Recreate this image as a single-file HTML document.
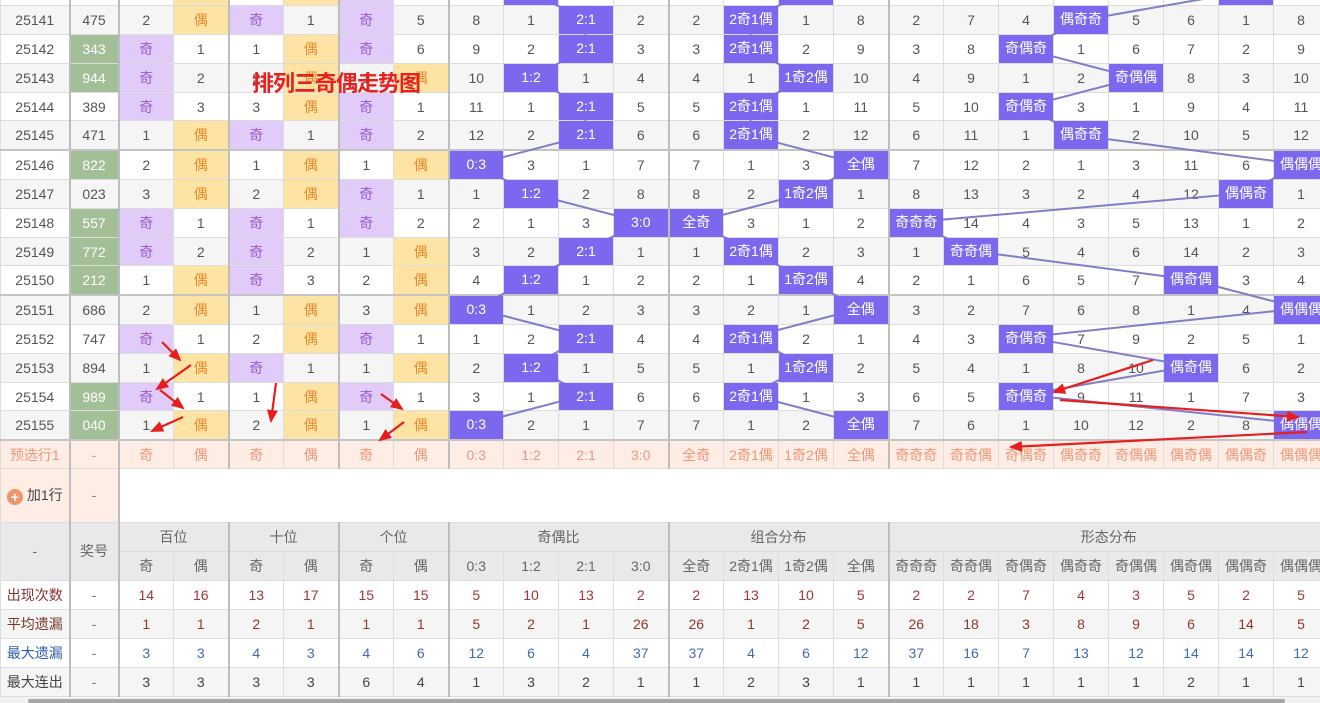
<!DOCTYPE html>
<html><head><meta charset="utf-8"><style>
html,body{margin:0;padding:0;width:1320px;height:703px;overflow:hidden;background:#fff;font-family:"Liberation Sans","Noto Sans CJK SC",sans-serif;}
#wrap{position:absolute;left:0;top:-23.5px;width:1328px;}
table{border-collapse:collapse;table-layout:fixed;width:1328px;font-size:14px;color:#555;}
td{border:1px solid #ddd;padding:0;text-align:center;height:27.8px;line-height:26px;white-space:nowrap;overflow:hidden;box-sizing:border-box;}
col.t{border-left:2px solid #bdbdbd;}
tr.a td{background:#f5f5f5;}
tr.g td{border-top:2px solid #c4c4c4;}
td.o{background:#e0cbf9 !important;color:#9a5cc6;}
td.e{background:#fde3a4 !important;color:#ee8a2c;}
td.n{background:#a3bf98 !important;color:#fff;}
td.h b{position:relative;z-index:2;display:block;background:#7b68ee;color:#fff;font-weight:normal;height:27.8px;line-height:27px;}
tr.p td{background:#fdede5;color:#f09878;height:28px;}
tr.ad td{height:54px;}
tr.ad td.pk{background:#fdede5;color:#444;}
tr.hd td{background:#e9e9e9;color:#666;height:29px;}
tr.s td{height:29px;}
tr.s.a td{background:#f5f5f5;}
tr.r1 td{color:#a83434;} tr.r1 td:first-child{color:#8b2f2f;}
tr.r2 td{color:#8a3a30;} tr.r2 td:first-child{color:#7a3a2a;}
tr.r3 td{color:#3f6bb5;} tr.r3 td:first-child{color:#2f5ea8;}
tr.r4 td{color:#444;}
td.dash{color:#777 !important;}
.plus{display:inline-block;width:16px;height:16px;border-radius:50%;background:#f0946c;color:#fff;font-size:14px;line-height:16px;vertical-align:middle;margin-right:4px;font-weight:bold;}
#lines{position:absolute;left:0;top:0;z-index:1;}
#arrows{position:absolute;left:0;top:0;z-index:4;}
#title{position:absolute;left:252px;top:66px;z-index:3;color:#e8201e;font-size:22px;font-weight:bold;letter-spacing:-1px;}
#sb{position:absolute;left:0;top:697px;width:1320px;height:6px;background:#f1f1f1;z-index:5;}
#sb div{position:absolute;left:28px;top:2px;width:1257px;height:4px;background:#a6a6a6;border-radius:2px;}
</style></head><body>
<div id="wrap">
<table>
<colgroup><col style="width:69px"><col class="t" style="width:49px"><col class="t" style="width:55px"><col style="width:55px"><col class="t" style="width:55px"><col style="width:55px"><col class="t" style="width:55px"><col style="width:55px"><col class="t" style="width:55px"><col style="width:55px"><col style="width:55px"><col style="width:55px"><col class="t" style="width:55px"><col style="width:55px"><col style="width:55px"><col style="width:55px"><col class="t" style="width:55px"><col style="width:55px"><col style="width:55px"><col style="width:55px"><col style="width:55px"><col style="width:55px"><col style="width:55px"><col style="width:55px"></colgroup>
<tr><td></td><td></td><td></td><td class="e"></td><td></td><td class="e"></td><td class="o"></td><td></td><td></td><td class="h"><b></b></td><td></td><td></td><td></td><td></td><td class="h"><b></b></td><td></td><td></td><td></td><td></td><td></td><td></td><td></td><td class="h"><b></b></td><td></td></tr>
<tr class="a"><td>25141</td><td>475</td><td>2</td><td class="e">偶</td><td class="o">奇</td><td>1</td><td class="o">奇</td><td>5</td><td>8</td><td>1</td><td class="h"><b>2:1</b></td><td>2</td><td>2</td><td class="h"><b>2奇1偶</b></td><td>1</td><td>8</td><td>2</td><td>7</td><td>4</td><td class="h"><b>偶奇奇</b></td><td>5</td><td>6</td><td>1</td><td>8</td></tr>
<tr><td>25142</td><td class="n">343</td><td class="o">奇</td><td>1</td><td>1</td><td class="e">偶</td><td class="o">奇</td><td>6</td><td>9</td><td>2</td><td class="h"><b>2:1</b></td><td>3</td><td>3</td><td class="h"><b>2奇1偶</b></td><td>2</td><td>9</td><td>3</td><td>8</td><td class="h"><b>奇偶奇</b></td><td>1</td><td>6</td><td>7</td><td>2</td><td>9</td></tr>
<tr class="a"><td>25143</td><td class="n">944</td><td class="o">奇</td><td>2</td><td>2</td><td class="e">偶</td><td>1</td><td class="e">偶</td><td>10</td><td class="h"><b>1:2</b></td><td>1</td><td>4</td><td>4</td><td>1</td><td class="h"><b>1奇2偶</b></td><td>10</td><td>4</td><td>9</td><td>1</td><td>2</td><td class="h"><b>奇偶偶</b></td><td>8</td><td>3</td><td>10</td></tr>
<tr><td>25144</td><td>389</td><td class="o">奇</td><td>3</td><td>3</td><td class="e">偶</td><td class="o">奇</td><td>1</td><td>11</td><td>1</td><td class="h"><b>2:1</b></td><td>5</td><td>5</td><td class="h"><b>2奇1偶</b></td><td>1</td><td>11</td><td>5</td><td>10</td><td class="h"><b>奇偶奇</b></td><td>3</td><td>1</td><td>9</td><td>4</td><td>11</td></tr>
<tr class="a"><td>25145</td><td>471</td><td>1</td><td class="e">偶</td><td class="o">奇</td><td>1</td><td class="o">奇</td><td>2</td><td>12</td><td>2</td><td class="h"><b>2:1</b></td><td>6</td><td>6</td><td class="h"><b>2奇1偶</b></td><td>2</td><td>12</td><td>6</td><td>11</td><td>1</td><td class="h"><b>偶奇奇</b></td><td>2</td><td>10</td><td>5</td><td>12</td></tr>
<tr class="g"><td>25146</td><td class="n">822</td><td>2</td><td class="e">偶</td><td>1</td><td class="e">偶</td><td>1</td><td class="e">偶</td><td class="h"><b>0:3</b></td><td>3</td><td>1</td><td>7</td><td>7</td><td>1</td><td>3</td><td class="h"><b>全偶</b></td><td>7</td><td>12</td><td>2</td><td>1</td><td>3</td><td>11</td><td>6</td><td class="h"><b>偶偶偶</b></td></tr>
<tr class="a"><td>25147</td><td>023</td><td>3</td><td class="e">偶</td><td>2</td><td class="e">偶</td><td class="o">奇</td><td>1</td><td>1</td><td class="h"><b>1:2</b></td><td>2</td><td>8</td><td>8</td><td>2</td><td class="h"><b>1奇2偶</b></td><td>1</td><td>8</td><td>13</td><td>3</td><td>2</td><td>4</td><td>12</td><td class="h"><b>偶偶奇</b></td><td>1</td></tr>
<tr><td>25148</td><td class="n">557</td><td class="o">奇</td><td>1</td><td class="o">奇</td><td>1</td><td class="o">奇</td><td>2</td><td>2</td><td>1</td><td>3</td><td class="h"><b>3:0</b></td><td class="h"><b>全奇</b></td><td>3</td><td>1</td><td>2</td><td class="h"><b>奇奇奇</b></td><td>14</td><td>4</td><td>3</td><td>5</td><td>13</td><td>1</td><td>2</td></tr>
<tr class="a"><td>25149</td><td class="n">772</td><td class="o">奇</td><td>2</td><td class="o">奇</td><td>2</td><td>1</td><td class="e">偶</td><td>3</td><td>2</td><td class="h"><b>2:1</b></td><td>1</td><td>1</td><td class="h"><b>2奇1偶</b></td><td>2</td><td>3</td><td>1</td><td class="h"><b>奇奇偶</b></td><td>5</td><td>4</td><td>6</td><td>14</td><td>2</td><td>3</td></tr>
<tr><td>25150</td><td class="n">212</td><td>1</td><td class="e">偶</td><td class="o">奇</td><td>3</td><td>2</td><td class="e">偶</td><td>4</td><td class="h"><b>1:2</b></td><td>1</td><td>2</td><td>2</td><td>1</td><td class="h"><b>1奇2偶</b></td><td>4</td><td>2</td><td>1</td><td>6</td><td>5</td><td>7</td><td class="h"><b>偶奇偶</b></td><td>3</td><td>4</td></tr>
<tr class="a g"><td>25151</td><td>686</td><td>2</td><td class="e">偶</td><td>1</td><td class="e">偶</td><td>3</td><td class="e">偶</td><td class="h"><b>0:3</b></td><td>1</td><td>2</td><td>3</td><td>3</td><td>2</td><td>1</td><td class="h"><b>全偶</b></td><td>3</td><td>2</td><td>7</td><td>6</td><td>8</td><td>1</td><td>4</td><td class="h"><b>偶偶偶</b></td></tr>
<tr><td>25152</td><td>747</td><td class="o">奇</td><td>1</td><td>2</td><td class="e">偶</td><td class="o">奇</td><td>1</td><td>1</td><td>2</td><td class="h"><b>2:1</b></td><td>4</td><td>4</td><td class="h"><b>2奇1偶</b></td><td>2</td><td>1</td><td>4</td><td>3</td><td class="h"><b>奇偶奇</b></td><td>7</td><td>9</td><td>2</td><td>5</td><td>1</td></tr>
<tr class="a"><td>25153</td><td>894</td><td>1</td><td class="e">偶</td><td class="o">奇</td><td>1</td><td>1</td><td class="e">偶</td><td>2</td><td class="h"><b>1:2</b></td><td>1</td><td>5</td><td>5</td><td>1</td><td class="h"><b>1奇2偶</b></td><td>2</td><td>5</td><td>4</td><td>1</td><td>8</td><td>10</td><td class="h"><b>偶奇偶</b></td><td>6</td><td>2</td></tr>
<tr><td>25154</td><td class="n">989</td><td class="o">奇</td><td>1</td><td>1</td><td class="e">偶</td><td class="o">奇</td><td>1</td><td>3</td><td>1</td><td class="h"><b>2:1</b></td><td>6</td><td>6</td><td class="h"><b>2奇1偶</b></td><td>1</td><td>3</td><td>6</td><td>5</td><td class="h"><b>奇偶奇</b></td><td>9</td><td>11</td><td>1</td><td>7</td><td>3</td></tr>
<tr class="a"><td>25155</td><td class="n">040</td><td>1</td><td class="e">偶</td><td>2</td><td class="e">偶</td><td>1</td><td class="e">偶</td><td class="h"><b>0:3</b></td><td>2</td><td>1</td><td>7</td><td>7</td><td>1</td><td>2</td><td class="h"><b>全偶</b></td><td>7</td><td>6</td><td>1</td><td>10</td><td>12</td><td>2</td><td>8</td><td class="h"><b>偶偶偶</b></td></tr>
<tr class="p g"><td>预选行1</td><td>-</td><td>奇</td><td>偶</td><td>奇</td><td>偶</td><td>奇</td><td>偶</td><td>0:3</td><td>1:2</td><td>2:1</td><td>3:0</td><td>全奇</td><td>2奇1偶</td><td>1奇2偶</td><td>全偶</td><td>奇奇奇</td><td>奇奇偶</td><td>奇偶奇</td><td>偶奇奇</td><td>奇偶偶</td><td>偶奇偶</td><td>偶偶奇</td><td>偶偶偶</td></tr>
<tr class="ad"><td class="pk"><span class="plus">+</span>加1行</td><td class="pk dash">-</td><td colspan="22"></td></tr>
<tr class="hd"><td rowspan="2">-</td><td rowspan="2">奖号</td><td colspan="2">百位</td><td colspan="2">十位</td><td colspan="2">个位</td><td colspan="4">奇偶比</td><td colspan="4">组合分布</td><td colspan="8">形态分布</td></tr>
<tr class="hd"><td>奇</td><td>偶</td><td>奇</td><td>偶</td><td>奇</td><td>偶</td><td>0:3</td><td>1:2</td><td>2:1</td><td>3:0</td><td>全奇</td><td>2奇1偶</td><td>1奇2偶</td><td>全偶</td><td>奇奇奇</td><td>奇奇偶</td><td>奇偶奇</td><td>偶奇奇</td><td>奇偶偶</td><td>偶奇偶</td><td>偶偶奇</td><td>偶偶偶</td></tr>
<tr class="s r1"><td>出现次数</td><td class="dash">-</td><td>14</td><td>16</td><td>13</td><td>17</td><td>15</td><td>15</td><td>5</td><td>10</td><td>13</td><td>2</td><td>2</td><td>13</td><td>10</td><td>5</td><td>2</td><td>2</td><td>7</td><td>4</td><td>3</td><td>5</td><td>2</td><td>5</td></tr>
<tr class="s a r2"><td>平均遗漏</td><td class="dash">-</td><td>1</td><td>1</td><td>2</td><td>1</td><td>1</td><td>1</td><td>5</td><td>2</td><td>1</td><td>26</td><td>26</td><td>1</td><td>2</td><td>5</td><td>26</td><td>18</td><td>3</td><td>8</td><td>9</td><td>6</td><td>14</td><td>5</td></tr>
<tr class="s r3"><td>最大遗漏</td><td class="dash">-</td><td>3</td><td>3</td><td>4</td><td>3</td><td>4</td><td>6</td><td>12</td><td>6</td><td>4</td><td>37</td><td>37</td><td>4</td><td>6</td><td>12</td><td>37</td><td>16</td><td>7</td><td>13</td><td>12</td><td>14</td><td>14</td><td>12</td></tr>
<tr class="s a r4"><td>最大连出</td><td class="dash">-</td><td>3</td><td>3</td><td>3</td><td>3</td><td>6</td><td>4</td><td>1</td><td>3</td><td>2</td><td>1</td><td>1</td><td>2</td><td>3</td><td>1</td><td>1</td><td>1</td><td>1</td><td>1</td><td>1</td><td>2</td><td>1</td><td>1</td></tr>
</table>
</div>
<svg id="lines" width="1320" height="703" viewBox="0 0 1320 703">
<g fill="none" stroke="#7f7fc6" stroke-width="2">
<polyline points="530.5,-8.4 585.5,20.4 585.5,49.2 530.5,78 585.5,106.8 585.5,135.6 475.5,164.4 530.5,193.2 640.5,222 585.5,250.8 530.5,279.6 475.5,308.4 585.5,337.2 530.5,366 585.5,394.8 475.5,423.6"/>
<polyline points="805.5,-8.4 750.5,20.4 750.5,49.2 805.5,78 750.5,106.8 750.5,135.6 860.5,164.4 805.5,193.2 695.5,222 750.5,250.8 805.5,279.6 860.5,308.4 750.5,337.2 805.5,366 750.5,394.8 860.5,423.6"/>
<polyline points="1245.5,-8.4 1080.5,20.4 1025.5,49.2 1135.5,78 1025.5,106.8 1080.5,135.6 1300.5,164.4 1245.5,193.2 915.5,222 970.5,250.8 1190.5,279.6 1300.5,308.4 1025.5,337.2 1190.5,366 1025.5,394.8 1300.5,423.6"/>
</g></svg>
<div id="title">排列三奇偶走势图</div>
<svg id="arrows" width="1320" height="703" viewBox="0 0 1320 703">
<defs><marker id="ah" markerWidth="6" markerHeight="5" refX="5" refY="2.5" orient="auto" markerUnits="strokeWidth"><path d="M0,0 L6,2.5 L0,5 Z" fill="#e61e1e"/></marker></defs>
<g stroke="#e61e1e" stroke-width="2.2" fill="none" marker-end="url(#ah)">
<line x1="162" y1="342" x2="180" y2="360"/>
<line x1="191" y1="365" x2="157" y2="389"/>
<line x1="160" y1="390" x2="183" y2="408"/>
<line x1="183" y1="417" x2="152" y2="431"/>
<line x1="276" y1="383" x2="271" y2="421"/>
<line x1="381" y1="394" x2="402" y2="409"/>
<line x1="404" y1="422" x2="380" y2="440"/>
<line x1="1153" y1="360" x2="1054" y2="392"/>
<line x1="1060" y1="400" x2="1298" y2="417"/>
<line x1="1307" y1="432" x2="1011" y2="447"/>
</g></svg>
<div id="sb"><div></div></div>
</body></html>
